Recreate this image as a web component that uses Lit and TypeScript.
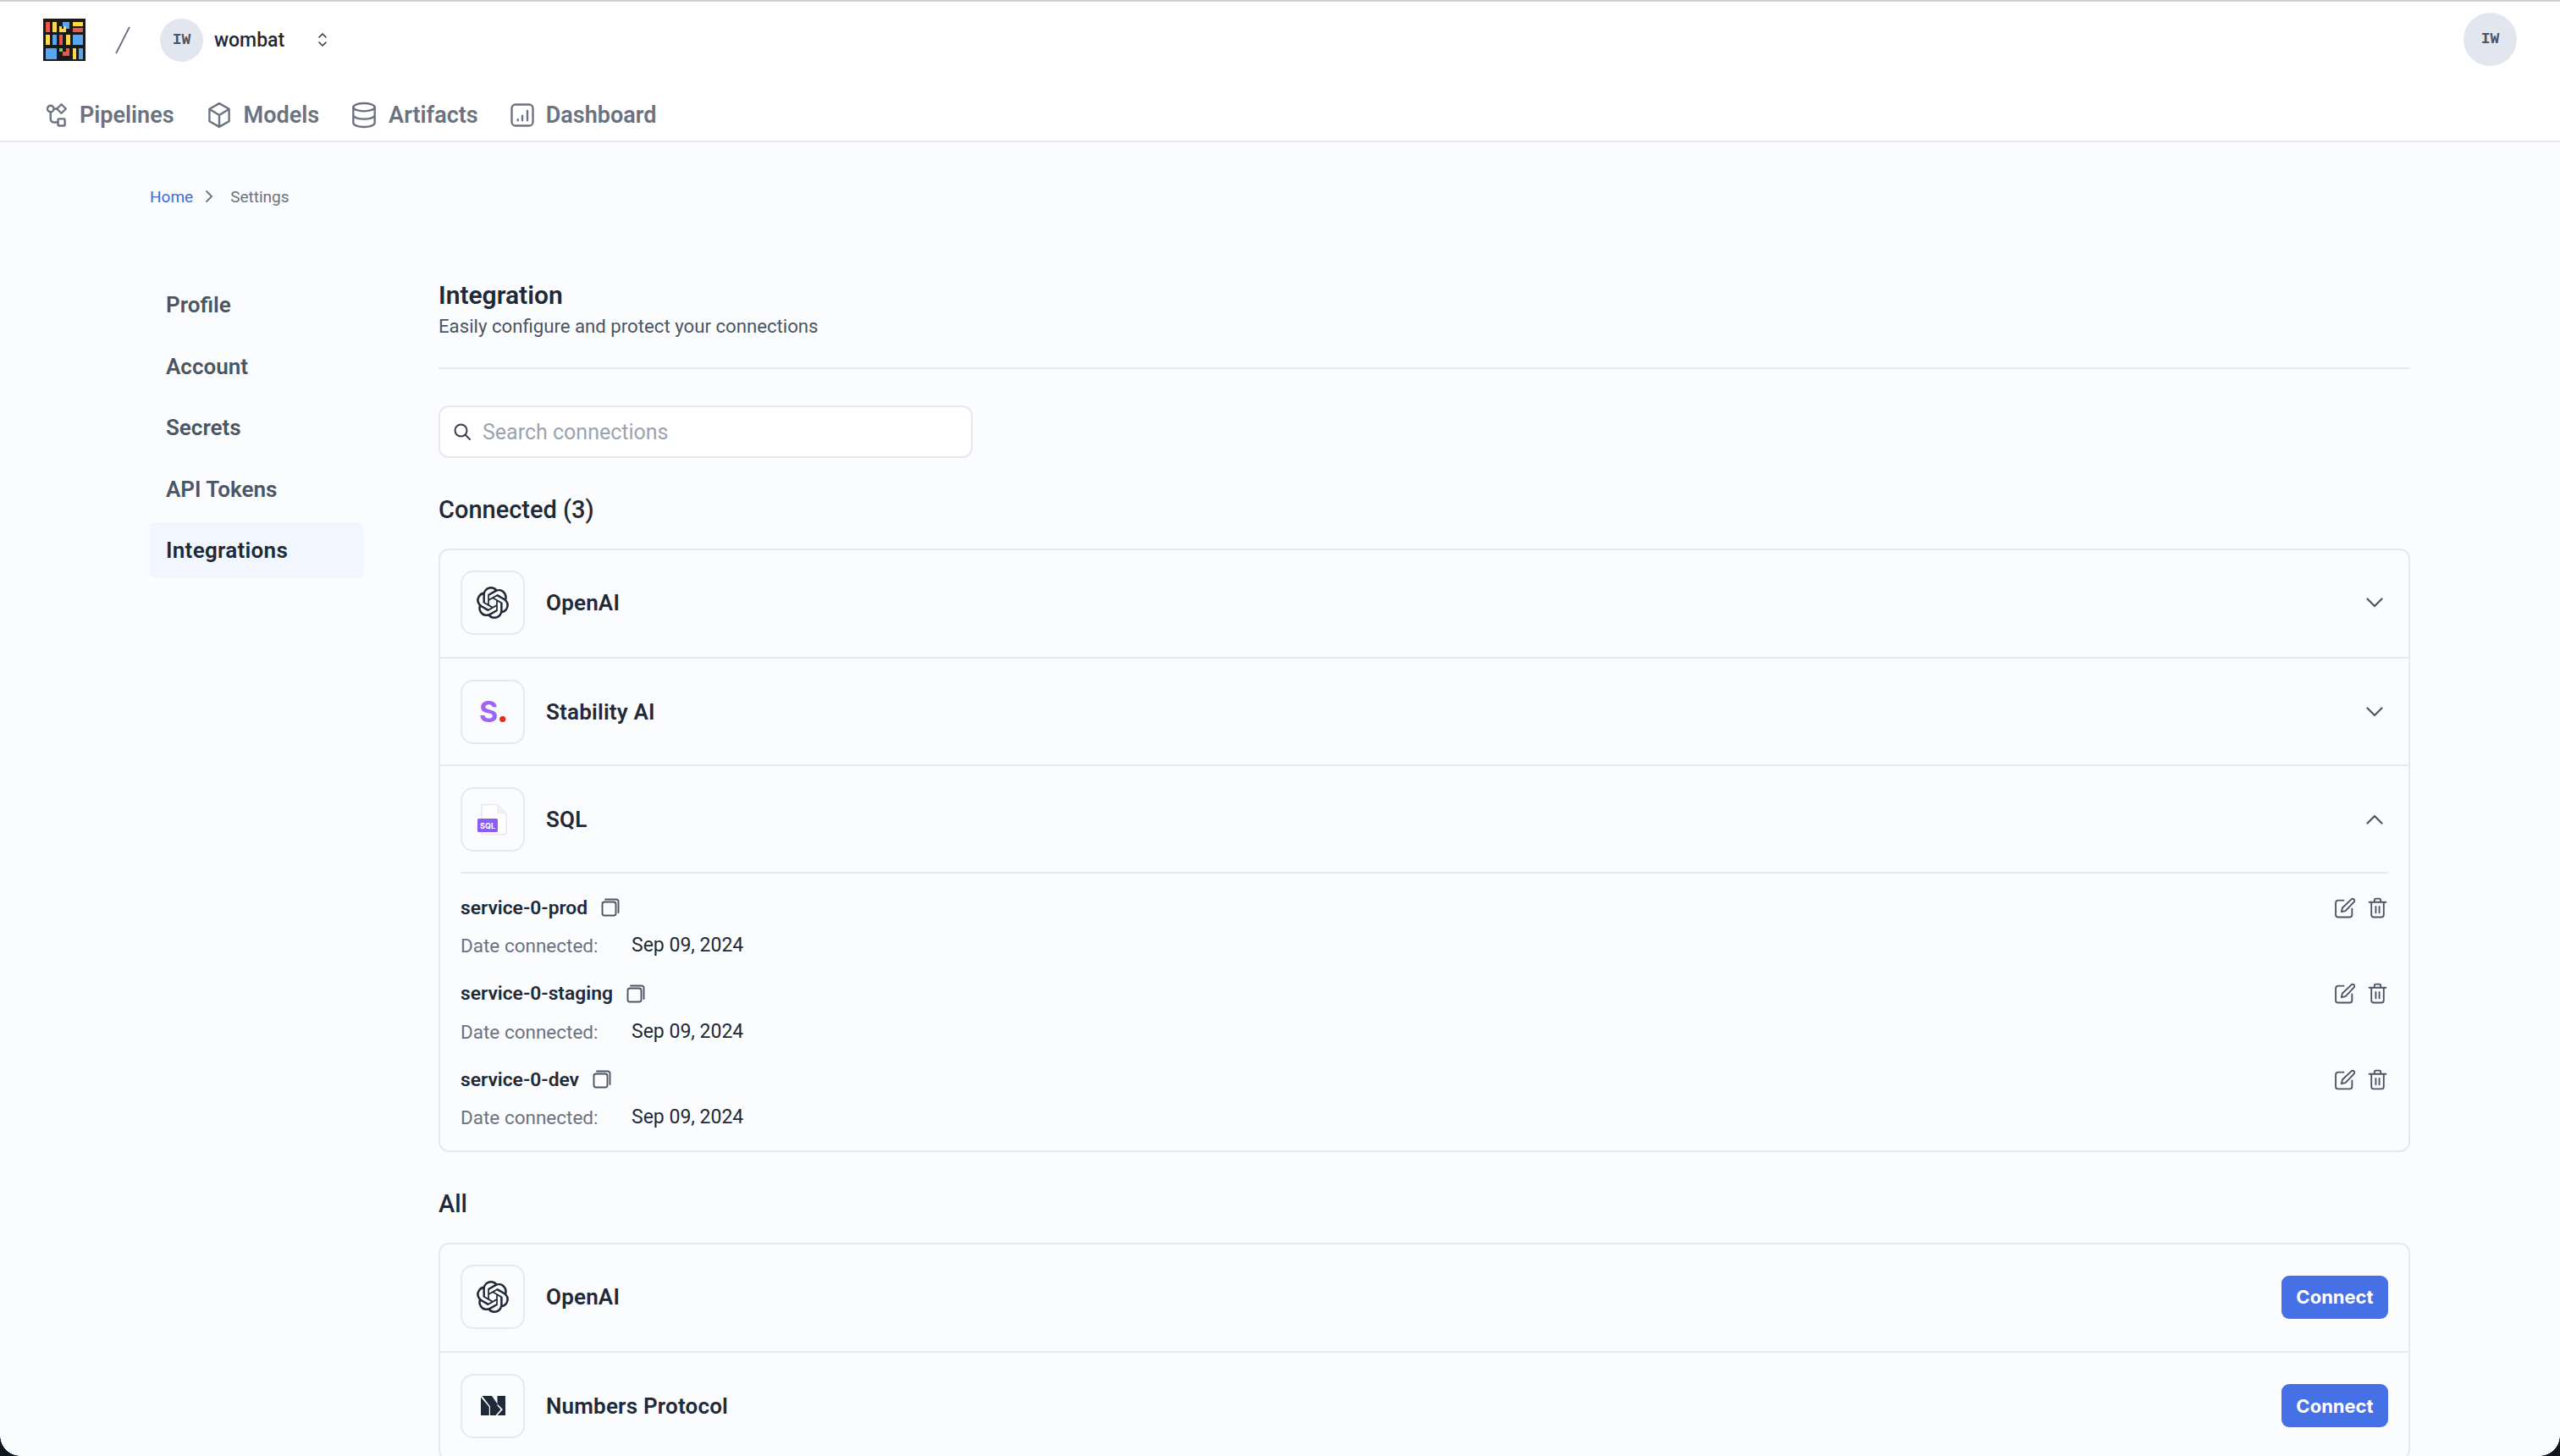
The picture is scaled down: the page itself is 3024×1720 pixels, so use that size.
import { LitElement, html, css, svg } from "lit";
import { customElement } from "lit/decorators.js";

const OPENAI = "M22.2819 9.8211a5.9847 5.9847 0 0 0-.5157-4.9108 6.0462 6.0462 0 0 0-6.5098-2.9A6.0651 6.0651 0 0 0 4.9807 4.1818a5.9847 5.9847 0 0 0-3.9977 2.9 6.0462 6.0462 0 0 0 .7427 7.0966 5.98 5.98 0 0 0 .511 4.9107 6.051 6.051 0 0 0 6.5146 2.9001A5.9847 5.9847 0 0 0 13.2599 24a6.0557 6.0557 0 0 0 5.7718-4.2058 5.9894 5.9894 0 0 0 3.9977-2.9001 6.0557 6.0557 0 0 0-.7475-7.0729zm-9.022 12.6081a4.4755 4.4755 0 0 1-2.8764-1.0408l.1419-.0804 4.7783-2.7582a.7948.7948 0 0 0 .3927-.6813v-6.7369l2.02 1.1686a.071.071 0 0 1 .038.052v5.5826a4.504 4.504 0 0 1-4.4945 4.4944zm-9.6607-4.1254a4.4708 4.4708 0 0 1-.5346-3.0137l.142.0852 4.783 2.7582a.7712.7712 0 0 0 .7806 0l5.8428-3.3685v2.3324a.0804.0804 0 0 1-.0332.0615L9.74 19.9502a4.4992 4.4992 0 0 1-6.1408-1.6464zM2.3408 7.8956a4.485 4.485 0 0 1 2.3655-1.9728V11.6a.7664.7664 0 0 0 .3879.6765l5.8144 3.3543-2.0201 1.1685a.0757.0757 0 0 1-.071 0l-4.8303-2.7865A4.504 4.504 0 0 1 2.3408 7.872zm16.5963 3.8558L13.1038 8.364 15.1192 7.2a.0757.0757 0 0 1 .071 0l4.8303 2.7913a4.4944 4.4944 0 0 1-.6765 8.1042v-5.6772a.79.79 0 0 0-.407-.667zm2.0107-3.0231l-.142-.0852-4.7735-2.7818a.7759.7759 0 0 0-.7854 0L9.409 9.2297V6.8974a.0662.0662 0 0 1 .0284-.0615l4.8303-2.7866a4.4992 4.4992 0 0 1 6.6802 4.66zM8.3065 12.863l-2.02-1.1638a.0804.0804 0 0 1-.038-.0567V6.0742a4.4992 4.4992 0 0 1 7.3757-3.4537l-.142.0805L8.704 5.459a.7948.7948 0 0 0-.3927.6813zm1.0976-2.3654l2.602-1.4998 2.6069 1.4998v2.9994l-2.5974 1.4997-2.6067-1.4997Z";

const stroke = (size: number, body: unknown, sw = 2, color = "#6b7280") => html`<svg width=${size} height=${size} viewBox="0 0 24 24" fill="none" stroke=${color} stroke-width=${sw} stroke-linecap="round" stroke-linejoin="round">${body}</svg>`;

const Y = "#fbd84e", B = "#5aa5f0", R = "#e8574a";
const logoRects: [number, number, number, number, string][] = [
  [3, 4, 5, 12, R], [11, 4, 5, 12, Y], [23, 4, 8, 8, B], [19, 9, 8, 7, Y], [22, 9, 2, 3, "#1a1a1a"], [35, 4, 12, 5, Y], [35, 11, 12, 5, R],
  [3, 19, 5, 12, Y], [11, 19, 5, 12, B], [19, 19, 4, 12, R], [27, 19, 5, 12, Y], [35, 19, 12, 12, B],
  [3, 35, 13, 13, B], [19, 35, 4, 4, "#6fcf6f"], [35, 35, 4, 13, Y], [42, 35, 5, 13, B],
];

const icons = {
  logo: html`<svg width="50" height="50" viewBox="0 0 50 50"><rect width="50" height="50" fill="#1a1a1a"/>
    ${logoRects.map(([x, y, w, h, f]) => svg`<rect x=${x} y=${y} width=${w} height=${h} fill=${f}/>`)}
    <path d="M23 39H27V35H31V44H23Z" fill=${R}/></svg>`,
  pipelines: stroke(30, svg`<circle cx="7" cy="6" r="3"/><path d="M17.200 1.800l4.300 4.200-4.300 4.200-4.300-4.200z"/><rect x="14" y="15.500" width="6.500" height="6.500" rx=".8"/><path d="M7 9v6.500a3.300 3.300 0 0 0 3.300 3.300H14M10 6h3"/>`, 1.9),
  models: stroke(32, svg`<path d="M12 1.600l8.700 5v10.800L12 22.400l-8.700-5V6.600zM3.500 6.800L12 12l8.500-5.200M12 12v10.200"/>`, 1.8),
  artifacts: stroke(32, svg`<ellipse cx="12" cy="5" rx="9.500" ry="3.500"/><path d="M2.500 5v14c0 1.900 4.300 3.500 9.500 3.500s9.500-1.600 9.500-3.500V5M2.500 12c0 1.900 4.300 3.500 9.500 3.500s9.500-1.600 9.500-3.500"/>`, 1.8),
  dashboard: stroke(30, svg`<rect x="2" y="2" width="20" height="20" rx="3.500"/><path d="M7.800 17v-.8M12 17v-4.500M16.800 17V8"/>`, 1.9),
  updown: html`<svg width="12" height="18" viewBox="0 0 12 18" fill="none" stroke="#374151" stroke-width="1.700" stroke-linecap="round" stroke-linejoin="round"><path d="M2 6l4-4 4 4M2 12l4 4 4-4"/></svg>`,
  search: stroke(24, svg`<circle cx="10.500" cy="10.500" r="7"/><path d="M15.500 15.500L21 21"/>`, 2, "#374151"),
  down: html`<svg width="20" height="12" viewBox="0 0 20 12" fill="none" stroke="#4b5563" stroke-width="2.200" stroke-linecap="round" stroke-linejoin="round"><path d="M1.500 1.500L10 10l8.500-8.500"/></svg>`,
  up: html`<svg width="20" height="12" viewBox="0 0 20 12" fill="none" stroke="#4b5563" stroke-width="2.200" stroke-linecap="round" stroke-linejoin="round"><path d="M1.500 10.500L10 2l8.500 8.500"/></svg>`,
  copy: stroke(24, svg`<rect x="2.500" y="5.500" width="16" height="16" rx="2.500"/><path d="M6 2.500h13a2.500 2.500 0 0 1 2.500 2.500v13"/>`, 1.9, "#4b5563"),
  edit: stroke(25, svg`<path d="M11 3.500H5a3 3 0 0 0-3 3V20a2.500 2.500 0 0 0 2.500 2.500H18a2.500 2.500 0 0 0 2.500-2.500v-7"/><path d="M20 2a2.200 2.200 0 0 1 3 3L13 15.500l-4.500 1 1-4.500z"/>`, 1.8, "#4b5563"),
  trash: stroke(25, svg`<path d="M2.500 5.500h19M8.500 5.500V3a1.500 1.500 0 0 1 1.500-1.500h4A1.500 1.500 0 0 1 15.500 3v2.500M5 5.500V20a2.500 2.500 0 0 0 2.500 2.500h9A2.500 2.500 0 0 0 19 20V5.500M10 10.500v7M14 10.500v7"/>`, 1.8, "#4b5563"),
  openai: html`<svg width="38" height="38" viewBox="0 0 24 24" fill="#1f2937"><path d=${OPENAI}/></svg>`,
  stability: html`<svg width="38" height="44" viewBox="0 -4 38 44"><text x="3" y="30" font-family="Inter, sans-serif" font-weight="700" font-size="34" fill="#9f66f6">S</text><circle cx="30.700" cy="26.500" r="3.600" fill="#e22d1f"/></svg>`,
  sql: html`<svg width="38" height="38" viewBox="0 0 38 38"><path d="M6 1.500h18l11 11V35a1.500 1.500 0 0 1-1.500 1.500H7.500A1.500 1.500 0 0 1 6 35z" fill="#fff" stroke="#e5e7f0" stroke-width="1.500"/><path d="M24 1.500V12.500h11z" fill="#eef0f6"/><rect x="1" y="18" width="24" height="16" rx="1.500" fill="#8b5cf6"/><text x="13" y="29.500" text-anchor="middle" font-family="Inter, sans-serif" font-size="9" font-weight="700" fill="#fff">SQL</text></svg>`,
  numbers: html`<svg width="29" height="23" viewBox="0 0 29 23"><rect width="29" height="23" fill="#1f2937"/><path d="M13 0H19.500V9.500Z" fill="#fbfcfe"/><path d="M0 0H1.500L11 12.500V23H9.800V13L0 1.500Z" fill="#fbfcfe"/><path d="M19.500 9.500L26 16L19.500 23H17.500L23.500 16L19.500 11.500Z" fill="#fbfcfe"/></svg>`,
};

@customElement("app-root")
export class AppRoot extends LitElement {
  static styles = css`
    :host { display: block; height: 1720px; overflow: hidden; position: relative; background: #fbfcfe; font-family: Roboto, "Noto Sans", sans-serif; color: #1f2937; }
    * { box-sizing: border-box; }
    svg { display: block; flex: none; }
    header { height: 168px; background: #fff; border-top: 2px solid #cfcfcf; border-bottom: 2px solid #e7e9ee; padding: 20px 51px 0 51px; }
    .top { display: flex; align-items: center; height: 50px; }
    .slash { width: 2px; height: 35px; background: #6b7280; transform: rotate(27deg); margin: 0 0 0 43px; }
    .avatar { width: 51px; height: 51px; border-radius: 50%; background: #e2e6ef; display: flex; align-items: center; justify-content: center; font-family: "Liberation Mono", monospace; font-size: 18px; font-weight: 700; color: #4b5563; }
    .org { margin-left: 43px; }
    .name { font-size: 23px; font-weight: 500; margin-left: 13px; width: 122px; color: #1f2937; }
    .spacer { flex: 1; }
    .me { width: 63px; height: 63px; margin-top: -2px; }
    nav { display: flex; margin-top: 44px; height: 40px; align-items: center; gap: 37px; }
    nav a { display: flex; align-items: center; gap: 13px; font-size: 27px; font-weight: 600; color: #6b7280; }
    .page { padding: 49px 177px 0; }
    .crumbs { display: flex; align-items: center; font-size: 19px; height: 30px; color: #6b7280; }
    .crumbs a { color: #4169e1; }
    .crumbs svg { margin: 0 20px 0 14px; }
    .cols { display: flex; margin-top: 84px; }
    aside { width: 252px; margin: -4px 89px 0 0; flex: none; }
    aside a { display: flex; align-items: center; height: 66px; margin-bottom: 6.500px; padding-left: 19px; border-radius: 6px; font-size: 26px; font-weight: 600; color: #4b5563; }
    aside a.on { background: #f2f6fe; color: #1f2937; letter-spacing: .3px; }
    main { flex: 1; width: 2329px; }
    h1 { margin: 0; font-size: 30px; line-height: 36px; font-weight: 600; }
    .sub { font-size: 22.200px; line-height: 37px; color: #4b5563; }
    .rule { height: 2px; background: #e7e9f0; margin: 30px 0 43px; }
    .search { width: 631px; height: 62px; border: 2px solid #e7e9f0; border-radius: 12px; background: #fff; display: flex; align-items: center; gap: 12px; padding-left: 14px; font-size: 25px; color: #9ca3af; }
    h2 { margin: 0; font-size: 29px; line-height: 36px; font-weight: 500; }
    .sect { margin: 43px 0 28px; }
    .card { border: 2px solid #e7e9f0; border-radius: 12px; }
    .row { display: flex; align-items: center; height: 127px; padding: 0 24px; }
    .row:first-child { height: 126px; padding-bottom: 2px; }
    .row + .row { border-top: 2px solid #e7e9f0; }
    .ico { width: 76px; height: 76px; border: 2px solid #e7e9f0; border-radius: 15px; display: flex; align-items: center; justify-content: center; background: #fbfcfe; }
    .label { margin-left: 25px; font-size: 26px; font-weight: 600; letter-spacing: .2px; flex: 1; }
    .chev { margin-right: 6px; }
    .detail { margin: 0 24px; border-top: 2px solid #e7e9f0; padding: 20px 0 0; height: 329px; }
    .svc { height: 101.500px; }
    .svc-top { display: flex; align-items: center; height: 40px; }
    .svc-name { font-size: 22.800px; font-weight: 600; margin-right: 15px; }
    .actions { margin-left: auto; display: flex; gap: 14px; }
    .svc-date { display: flex; margin-top: 9px; font-size: 23px; line-height: 32px; color: #1f2937; }
    .svc-date span { width: 202px; font-size: 22.500px; color: #6b7280; }
    .btn { width: 126px; height: 51px; border-radius: 9px; background: #4570e6; color: #fff; font-family: Inter, sans-serif; font-size: 22px; font-weight: 700; display: flex; align-items: center; justify-content: center; }
    .corner { position: absolute; bottom: 0; width: 24px; height: 24px; }
    .corner.l { left: 0; background: radial-gradient(circle at 100% 0, transparent 23.500px, #0f1720 24px); }
    .corner.r { right: 0; background: radial-gradient(circle at 0 0, transparent 23.500px, #0f1720 24px); }
  `;

  private svc(name: string) {
    return html`<div class="svc"><div class="svc-top"><div class="svc-name">${name}</div>${icons.copy}
      <div class="actions">${icons.edit}${icons.trash}</div></div>
      <div class="svc-date"><span>Date connected:</span>Sep 09, 2024</div></div>`;
  }

  render() {
    return html`
      <header>
        <div class="top">
          ${icons.logo}<div class="slash"></div>
          <div class="avatar org">IW</div><div class="name">wombat</div>${icons.updown}
          <div class="spacer"></div><div class="avatar me">IW</div>
        </div>
        <nav>
          <a>${icons.pipelines}Pipelines</a><a>${icons.models}Models</a><a>${icons.artifacts}Artifacts</a><a>${icons.dashboard}Dashboard</a>
        </nav>
      </header>
      <div class="page">
        <div class="crumbs"><a>Home</a><svg width="10" height="16" viewBox="0 0 10 16" fill="none" stroke="#6b7280" stroke-width="1.800" stroke-linecap="round" stroke-linejoin="round"><path d="M2 2l6 6-6 6"/></svg>Settings</div>
        <div class="cols">
          <aside><a>Profile</a><a>Account</a><a>Secrets</a><a>API Tokens</a><a class="on">Integrations</a></aside>
          <main>
            <h1>Integration</h1>
            <div class="sub">Easily configure and protect your connections</div>
            <div class="rule"></div>
            <div class="search">${icons.search}Search connections</div>
            <h2 class="sect">Connected (3)</h2>
            <div class="card">
              <div class="row"><div class="ico">${icons.openai}</div><div class="label">OpenAI</div><div class="chev">${icons.down}</div></div>
              <div class="row"><div class="ico">${icons.stability}</div><div class="label">Stability AI</div><div class="chev">${icons.down}</div></div>
              <div class="row"><div class="ico">${icons.sql}</div><div class="label">SQL</div><div class="chev">${icons.up}</div></div>
              <div class="detail">${this.svc("service-0-prod")}${this.svc("service-0-staging")}${this.svc("service-0-dev")}</div>
            </div>
            <h2 class="sect">All</h2>
            <div class="card">
              <div class="row"><div class="ico">${icons.openai}</div><div class="label">OpenAI</div><div class="btn">Connect</div></div>
              <div class="row"><div class="ico">${icons.numbers}</div><div class="label">Numbers Protocol</div><div class="btn">Connect</div></div>
            </div>
          </main>
        </div>
      </div>
      <div class="corner l"></div><div class="corner r"></div>
    `;
  }
}
